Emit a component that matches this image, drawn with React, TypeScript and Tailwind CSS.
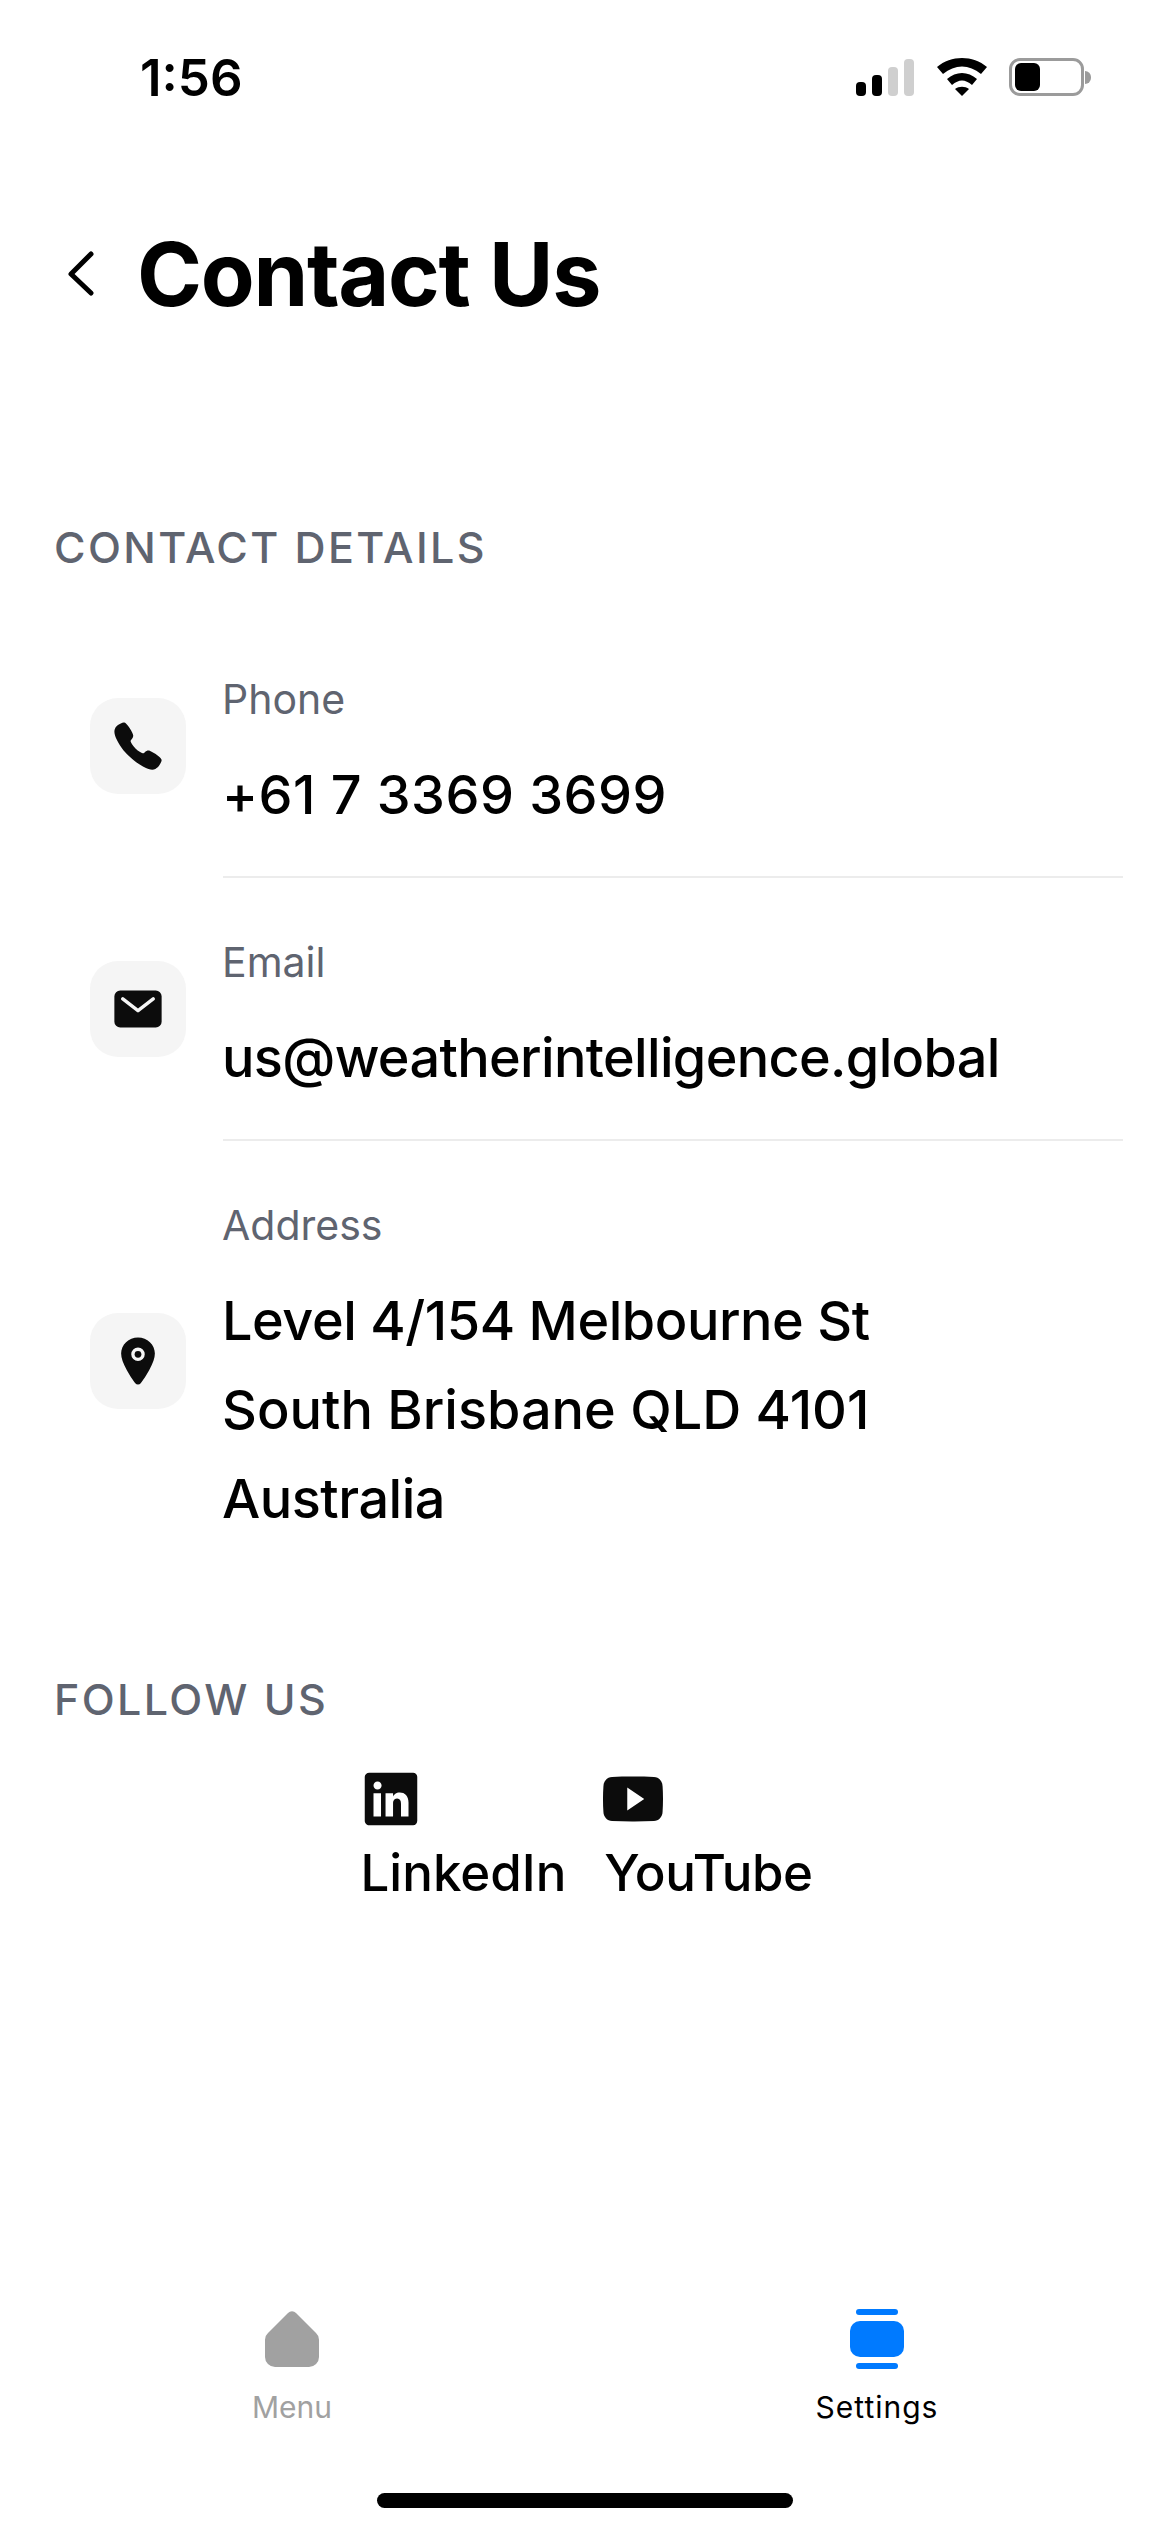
import { IoCall, IoMail, IoLocation, IoLogoLinkedin, IoLogoYoutube } from "react-icons/io5";

const font = { fontFamily: "Inter, sans-serif" };

type Line = { text: string; tracking: string };

function ContactRow({ label, lines, icon, iconTop, divider }: { label: string; lines: Line[]; icon: React.ReactNode; iconTop: string; divider?: boolean }) {
  return (
    <div className="flex">
      <div className="w-[133px] shrink-0">
        <div className={`w-[96px] h-[96px] rounded-[28px] bg-[#f5f5f5] flex items-center justify-center ${iconTop}`}>
          {icon}
        </div>
      </div>
      <div className={`flex-1 ${divider ? "border-b-2 border-[#ececec] h-[204px]" : ""}`}>
        <p className="-ml-[1px] text-[41px] leading-[50px] text-[#5f6470]">{label}</p>
        <div className="mt-[26px] -ml-[1px]">
          {lines.map((line) => (
            <p key={line.text} className={`text-[54px] leading-[89px] font-[450] text-black ${line.tracking}`}>{line.text}</p>
          ))}
        </div>
      </div>
    </div>
  );
}

export default function App() {
  return (
    <div className="w-[1170px] h-[2532px] bg-white flex flex-col overflow-hidden" style={font}>
      {/* STATUS BAR */}
      <div className="h-[100px] pt-[50px] pl-[140px] pr-[79px] flex items-start justify-between">
        <span className="text-[51px] leading-[56px] font-semibold text-black">1:56</span>
        <div className="flex items-center mt-[8px]">
          <svg width="58" height="37" viewBox="0 0 58 37">
            <rect x="0" y="23" width="10" height="14" rx="4" fill="#000" />
            <rect x="16" y="16" width="10" height="21" rx="4" fill="#000" />
            <rect x="32" y="8" width="10" height="29" rx="4" fill="#cfcfcf" />
            <rect x="48" y="0" width="10" height="37" rx="4" fill="#cfcfcf" />
          </svg>
          <svg width="50" height="38" viewBox="0 0 50 38" className="ml-[23px]">
            <path d="M0 9C14-3 36-3 50 9L44 16C32 6 18 6 6 16z" fill="#000" />
            <path d="M10 21C19 13 31 13 40 21L35 27C28 21 22 21 15 27z" fill="#000" />
            <path d="M18 31C22 28 28 28 32 31L25 38z" fill="#000" />
          </svg>
          <div className="flex items-center ml-[22px]">
            <div className="w-[75px] h-[38px] rounded-[11px] border-[3px] border-[#9b9b9b] px-[3px] py-[2px]">
              <div className="w-[25px] h-full rounded-[6px] bg-black" />
            </div>
            <div className="w-[6px] h-[13px] rounded-r-full bg-[#9b9b9b] ml-[1px]" />
          </div>
        </div>
      </div>

      {/* HEADER */}
      <div className="mt-[129px] pl-[66px] flex items-center h-[90px]">
        <svg width="30" height="46" viewBox="0 0 30 46" className="shrink-0">
          <path d="M25 3 5 23l20 19" fill="none" stroke="#000" strokeWidth="5" strokeLinecap="round" strokeLinejoin="round" />
        </svg>
        <h1 className="ml-[41px] text-[88px] leading-[90px] font-bold tracking-[-1.300px] text-black">Contact Us</h1>
      </div>

      {/* CONTACT DETAILS */}
      <p className="mt-[202px] pl-[54px] text-[43px] leading-[52px] font-medium tracking-[2.400px] text-[#5f6470]">CONTACT DETAILS</p>
      <div className="mt-[101px] pl-[90px] pr-[47px] flex flex-col gap-[59px]">
        <ContactRow
          label="Phone"
          lines={[{ text: "+61 7 3369 3699", tracking: "tracking-[0.450px]" }]}
          icon={<IoCall size={54} color="#0c0c0c" />}
          iconTop="mt-[24px]"
          divider
        />
        <ContactRow
          label="Email"
          lines={[{ text: "us@weatherintelligence.global", tracking: "tracking-[-0.660px]" }]}
          icon={<IoMail size={54} color="#0c0c0c" />}
          iconTop="mt-[24px]"
          divider
        />
        <ContactRow
          label="Address"
          lines={[
            { text: "Level 4/154 Melbourne St", tracking: "tracking-[-0.450px]" },
            { text: "South Brisbane QLD 4101", tracking: "tracking-[0px]" },
            { text: "Australia", tracking: "tracking-[-0.500px]" },
          ]}
          icon={<IoLocation size={54} color="#0c0c0c" />}
          iconTop="mt-[113px]"
        />
      </div>

      {/* FOLLOW US */}
      <p className="mt-[130px] pl-[54px] text-[43px] leading-[52px] font-medium tracking-[2.400px] text-[#5f6470]">FOLLOW US</p>
      <div className="mt-[44px] pl-[3px] flex justify-center gap-[38px]">
        <div className="flex flex-col items-start">
          <div className="h-[60px] flex items-center">
            <IoLogoLinkedin size={60} color="#0c0c0c" />
          </div>
          <span className="mt-[13px] text-[51px] leading-[62px] font-medium text-black">LinkedIn</span>
        </div>
        <div className="flex flex-col items-start">
          <div className="h-[60px] flex items-center -ml-[1px]">
            <IoLogoYoutube size={60} color="#0c0c0c" />
          </div>
          <span className="mt-[13px] text-[51px] leading-[62px] font-medium tracking-[-0.500px] text-black">YouTube</span>
        </div>
      </div>

      {/* TAB BAR */}
      <div className="mt-auto">
        <div className="flex justify-between pl-[212px] pr-[213px]">
          <div className="flex flex-col items-center w-[160px] pt-[2px]">
            <svg width="56" height="56" viewBox="0 0 56 56">
              <path d="M24 2a5.500 5.500 0 0 1 8 0L52 22a9 9 0 0 1 3 7v17a10 10 0 0 1-10 10H11a10 10 0 0 1-10-10V29a9 9 0 0 1 3-7z" fill="#a1a1a1" />
            </svg>
            <span className="mt-[22px] text-[30px] leading-[36px] text-[#a1a1a1] whitespace-nowrap">Menu</span>
          </div>
          <div className="flex flex-col items-center w-[160px]">
            <svg width="54" height="60" viewBox="0 0 54 60">
              <rect x="6" y="0" width="42" height="6" rx="3" fill="#007aff" />
              <rect x="0" y="12" width="54" height="36" rx="10" fill="#007aff" />
              <rect x="6" y="54" width="42" height="6" rx="3" fill="#007aff" />
            </svg>
            <span className="mt-[20px] text-[30px] leading-[36px] tracking-[1px] text-black whitespace-nowrap">Settings</span>
          </div>
        </div>
        <div className="mt-[68px] mb-[24px] mx-auto w-[416px] h-[15px] rounded-full bg-black" />
      </div>
    </div>
  );
}
